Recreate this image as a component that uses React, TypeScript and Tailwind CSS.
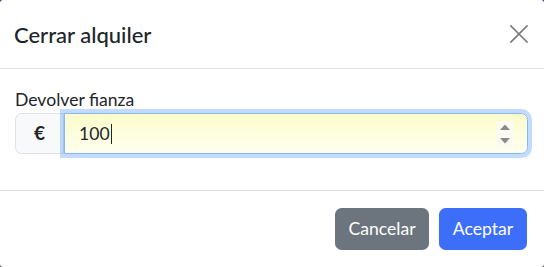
import React from "react";

export default function App() {
  return (
    <div
      className="w-[544px] h-[267px] overflow-hidden bg-gradient-to-b from-[#1e2f6e] to-[#4a4a4a]"
      style={{ fontFamily: 'Lato, "Noto Sans", sans-serif' }}
    >
      <div className="w-[544px] h-[267px] bg-white rounded-[3px] flex flex-col text-[#212529]">
        {/* Header */}
        <div className="h-[69px] shrink-0 flex items-center justify-between pl-[14px] pr-[16px] border-b border-[#dee2e6]">
          <h5 className="text-[22px] leading-[33px] font-medium pt-[1px]">Cerrar alquiler</h5>
          <button className="w-[18px] h-[18px] flex items-center justify-center mb-[1px]">
            <svg width="18" height="18" viewBox="0 0 18 18">
              <path d="M1 1 L17 17 M17 1 L1 17" stroke="#7b7b7b" strokeWidth="1.7" strokeLinecap="square" />
            </svg>
          </button>
        </div>
        {/* Body */}
        <div className="h-[122px] shrink-0 px-[15px] pt-[18px] border-b border-[#dee2e6]">
          <div className="text-[17.6px] leading-[26px]">Devolver fianza</div>
          <div className="flex h-[41px] w-[513px]">
            <div className="w-[49px] shrink-0 flex items-center justify-center bg-[#f8f9fa] border border-[#dee2e6] rounded-l-[6.6px] text-[19px] font-bold">
              €
            </div>
            <div className="relative flex-1 flex items-center pl-[14px] border border-[#86b7fe] rounded-r-[6.6px] bg-gradient-to-b from-[#fafcca] to-[#fffff0] shadow-[0_0_0_4px_rgba(13,110,253,0.25)]">
              <span className="text-[17.6px] leading-[26px]">100</span>
              <span className="w-[1px] h-[20px] bg-[#212529] ml-[1px]" />
              <div className="absolute right-[14px] top-[7px] w-[16px] h-[26px] bg-[#fbfbf3] flex flex-col items-center justify-between py-[3px]">
                <svg width="12" height="6" viewBox="0 0 12 6">
                  <path d="M1 6 L6 0.5 L11 6 Z" fill="#8a8a8a" />
                </svg>
                <svg width="12" height="6" viewBox="0 0 12 6">
                  <path d="M1 0 L6 5.5 L11 0 Z" fill="#8a8a8a" />
                </svg>
              </div>
            </div>
          </div>
        </div>
        {/* Footer */}
        <div className="flex-1 flex items-start justify-end gap-[10px] pt-[17px] pr-[17px]">
          <button className="w-[94px] h-[42px] rounded-[6.6px] bg-[#6c757d] text-white text-[17.6px]">
            Cancelar
          </button>
          <button className="w-[88px] h-[42px] rounded-[6.6px] bg-[#3d6efa] text-white text-[17.6px]">
            Aceptar
          </button>
        </div>
      </div>
    </div>
  );
}
